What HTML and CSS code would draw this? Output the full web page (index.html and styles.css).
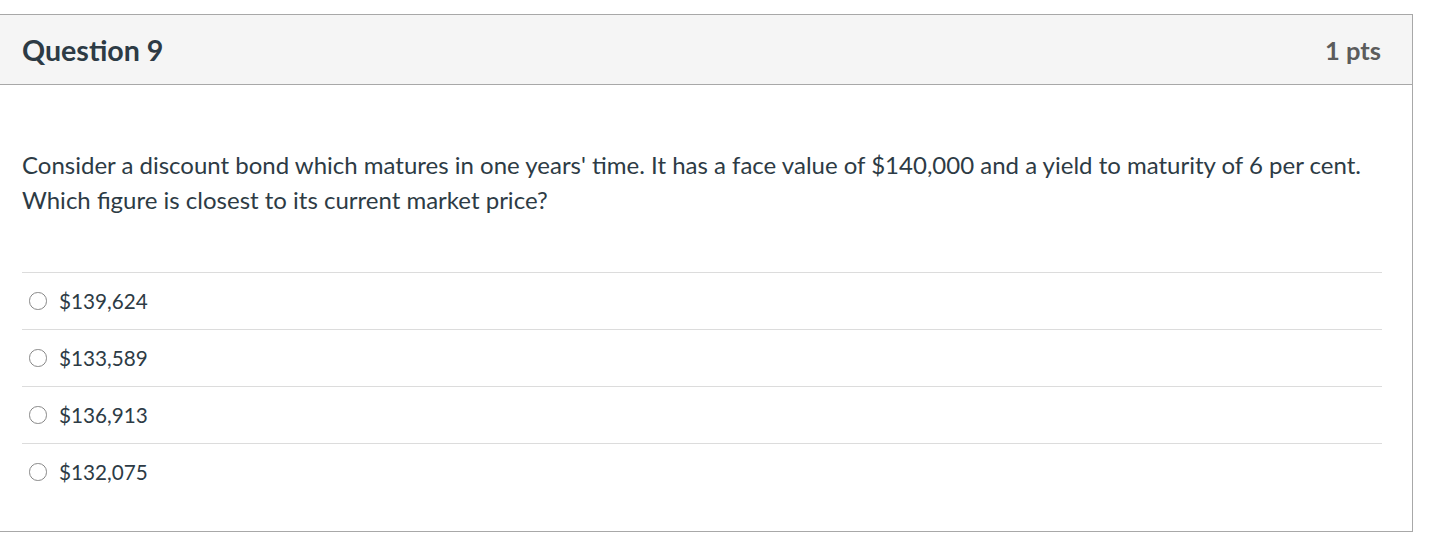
FILE: index.html
```html
<!DOCTYPE html>
<html>
<head>
<meta charset="utf-8">
<link rel="stylesheet" href="styles.css">
</head>
<body>
<div class="question">
  <div class="q-header">
    <h2 class="q-title">Question 9</h2>
    <span class="q-points">1 pts</span>
  </div>
  <div class="q-body">
    <p class="q-text">Consider a discount bond which matures in one years' time. It has a face value of $140,000 and a yield to maturity of 6 per cent. Which figure is closest to its current market price?</p>
    <ul class="answers">
      <li class="answer"><span class="radio"></span><span class="label">$139,624</span></li>
      <li class="answer"><span class="radio"></span><span class="label">$133,589</span></li>
      <li class="answer"><span class="radio"></span><span class="label">$136,913</span></li>
      <li class="answer"><span class="radio"></span><span class="label">$132,075</span></li>
    </ul>
  </div>
</div>
</body>
</html>
```
FILE: styles.css
```css
html, body {
  margin: 0;
  padding: 0;
  background: #fff;
}
body {
  padding-top: 14px;
  font-family: Lato, "Noto Sans", sans-serif;
  color: #2d3b45;
}
.question {
  border: 1px solid #a8a8a8;
  border-left: none;
  box-sizing: border-box;
  width: 1413px;
}
.q-header {
  display: flex;
  align-items: center;
  justify-content: space-between;
  height: 69px;
  background: #f5f5f5;
  border-bottom: 1px solid #a8a8a8;
  padding: 0 31px 0 22px;
}
.q-title {
  margin: 0;
  font-size: 28.6px;
  font-weight: 700;
  color: #2d3b45;
}
.q-points {
  font-size: 25.5px;
  font-weight: 700;
  color: #5c5c5c;
}
.q-body {
  padding: 62px 30px 31px 22px;
}
.q-text {
  margin: 0 0 55px;
  font-size: 24px;
  line-height: 35px;
}
.answers {
  list-style: none;
  margin: 0;
  padding: 0;
}
.answer {
  display: flex;
  align-items: center;
  height: 56px;
  border-top: 1px solid #dcdcdc;
  font-size: 20.7px;
}
.radio {
  width: 15.5px;
  height: 15.5px;
  border: 1.4px solid #888;
  border-radius: 50%;
  margin-left: 7px;
  margin-right: 12.5px;
  box-sizing: content-box;
  flex: none;
}
```
